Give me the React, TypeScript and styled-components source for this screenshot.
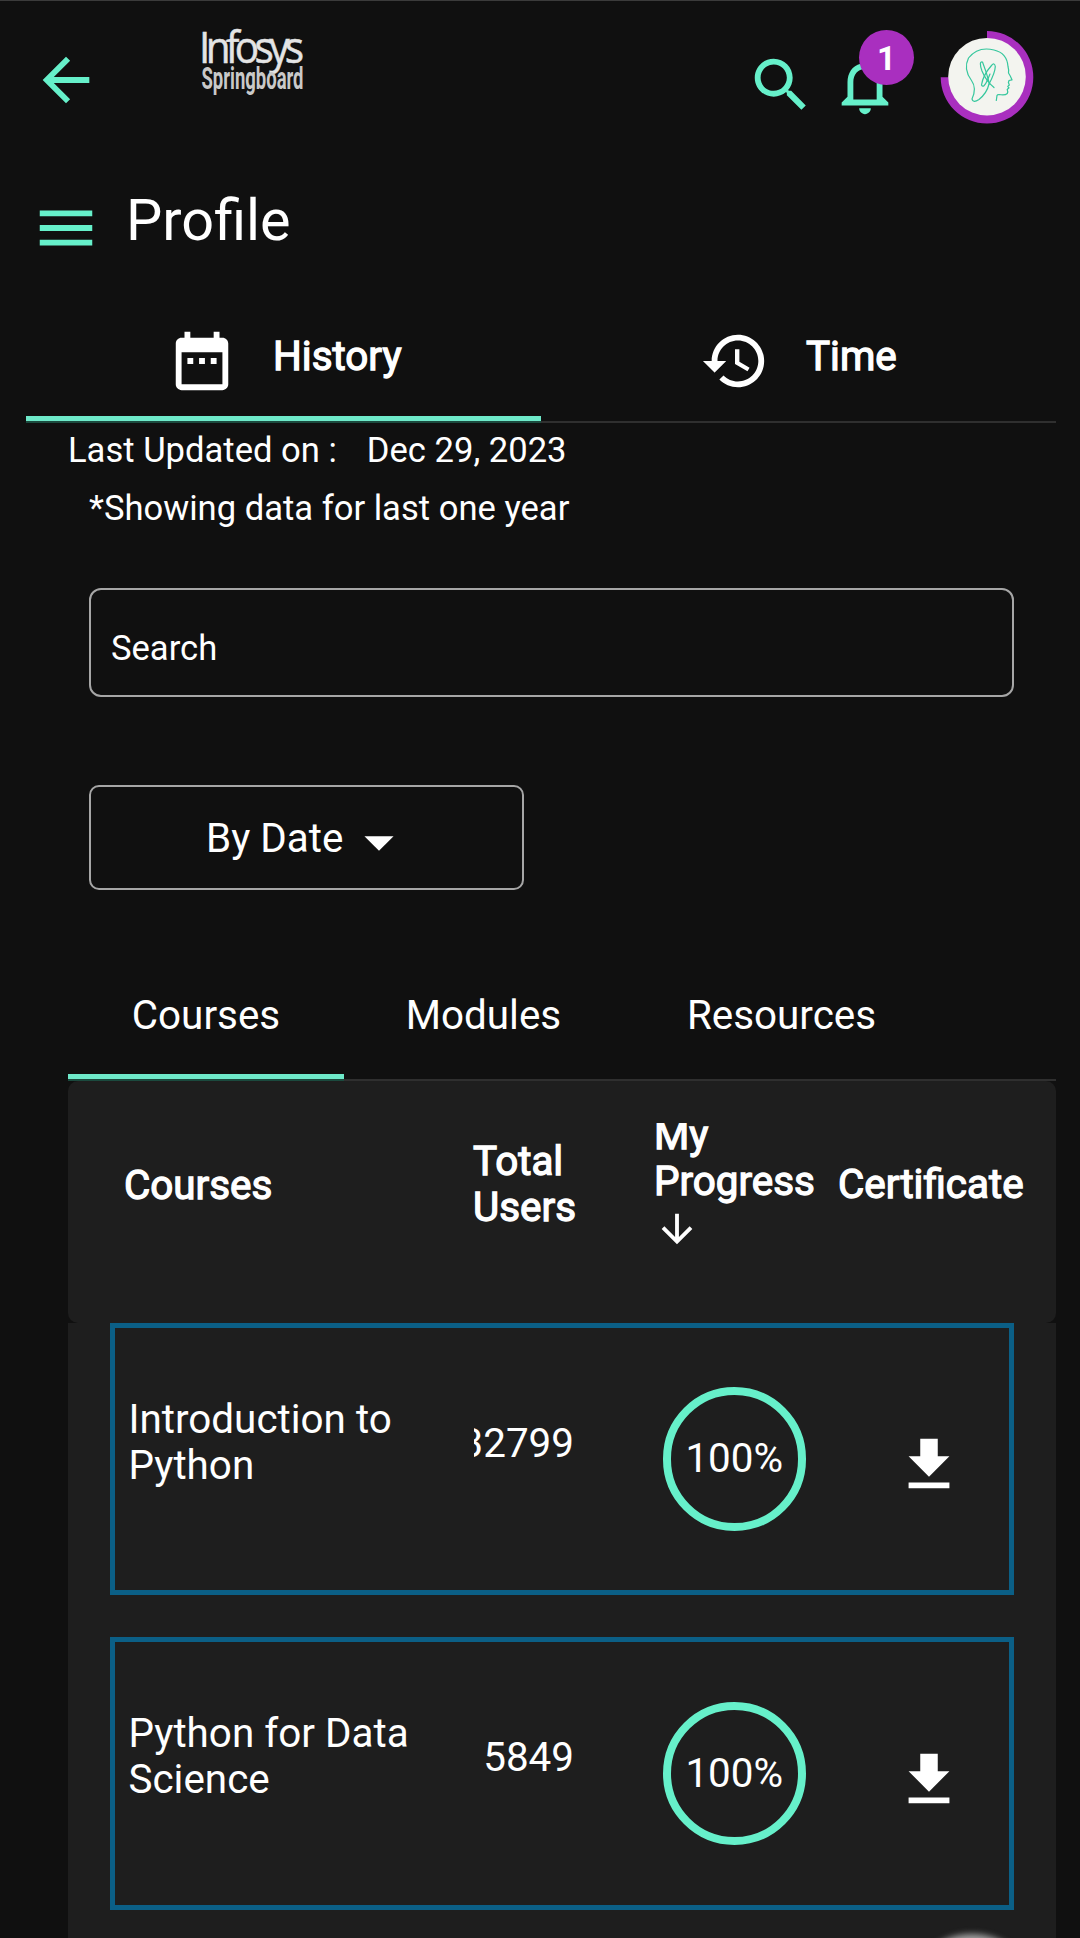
import React from "react";
import styled, { createGlobalStyle } from "styled-components";

const mint = "#66f0ca";
const purple = "#a92fbf";

const GlobalStyle = createGlobalStyle`
  body {
    margin: 0;
    background: #101010;
    color: #fff;
    font-family: Roboto, "Noto Sans", sans-serif;
  }
  *, *::before, *::after { box-sizing: border-box; }
`;

const Screen = styled.div`
  position: relative;
  display: flex;
  flex-direction: column;
  width: 1080px;
  height: 1938px;
  overflow: hidden;
  background: #101010;
  border-top: 1px solid #3b3b3b;
  > * { flex: none; }
`;

const Icon = styled.svg<{ $size: number; $color?: string }>`
  display: block;
  flex: none;
  width: ${(p) => p.$size}px;
  height: ${(p) => p.$size}px;
  fill: ${(p) => p.$color ?? "#fff"};
`;

const TopBar = styled.header`
  display: flex;
  align-items: flex-start;
  height: 150px;
  padding: 14px 41px 0 31px;
`;

const BackButton = styled.div`
  padding-top: 30px;
`;

const Logo = styled.svg`
  display: block;
  width: 130px;
  height: 92px;
  margin-left: 87px;
  margin-right: auto;
`;

const Actions = styled.div`
  display: flex;
  align-items: flex-start;
  padding-top: 10px;
`;

const SearchButton = styled.div`
  padding-top: 25px;
  margin-right: 14px;
`;

const Bell = styled.div`
  position: relative;
  width: 70px;
  padding-top: 25px;
  margin-right: 35px;
`;

const Badge = styled.span`
  position: absolute;
  top: 5px;
  left: 29px;
  width: 55px;
  height: 55px;
  border-radius: 50%;
  background: ${purple};
  font-size: 33px;
  font-weight: 700;
  line-height: 57px;
  text-align: center;
`;

const Avatar = styled.svg`
  display: block;
  width: 104px;
  height: 104px;
`;

const TitleRow = styled.div`
  display: flex;
  align-items: flex-start;
  height: 147px;
  padding: 42px 0 0 31px;
`;

const Title = styled.h1`
  margin: -1px 0 0 25px;
  font-size: 57.6px;
  font-weight: 400;
  line-height: 58px;
`;

const MainTabs = styled.nav`
  display: grid;
  grid-template-columns: 515px 515px;
  margin-left: 26px;
  width: 1030px;
  height: 125px;
`;

const MainTab = styled.div<{ $active?: boolean; $start: number }>`
  display: flex;
  align-items: flex-start;
  padding: 28px 0 0 ${(p) => p.$start}px;
  border-bottom: 2px solid ${(p) => (p.$active ? "#1b4a3e" : "#2f2f2f")};
  box-shadow: ${(p) => (p.$active ? "inset 0 -5px 0 #6ee9c9" : "none")};
`;

const TabLabel = styled.span`
  margin: 8px 0 0 36px;
  font-size: 40.4px;
  line-height: 46px;
  -webkit-text-stroke: 1.3px #fff;
`;

const Meta = styled.div`
  display: flex;
  gap: 30px;
  padding: 6px 0 0 68px;
  font-size: 34.6px;
  line-height: 42px;
`;

const Note = styled.div`
  padding: 16px 0 0 89px;
  font-size: 34.6px;
  line-height: 42px;
`;

const SearchField = styled.div`
  display: flex;
  align-items: center;
  width: 925px;
  height: 109px;
  margin: 59px 0 0 89px;
  padding: 11px 0 0 20px;
  border: 2px solid #a6a6a6;
  border-radius: 12px;
  font-size: 34.6px;
`;

const SortSelect = styled.div`
  display: flex;
  align-items: center;
  width: 435px;
  height: 105px;
  margin: 88px 0 0 89px;
  padding: 2px 0 0 115px;
  border: 2px solid #a6a6a6;
  border-radius: 10px;
  font-size: 40.4px;
  line-height: 48px;
  svg { margin: 7px 0 0 1px; }
`;

const SubTabs = styled.nav`
  display: flex;
  width: 988px;
  height: 131px;
  margin: 60px 0 0 68px;
  border-bottom: 2px solid #2f2f2f;
`;

const SubTab = styled.div<{ $width: number; $active?: boolean }>`
  width: ${(p) => p.$width}px;
  height: 131px;
  padding-top: 43px;
  text-align: center;
  font-size: 40.4px;
  line-height: 46px;
  border-bottom: 2px solid ${(p) => (p.$active ? "#1b4a3e" : "transparent")};
  box-shadow: ${(p) => (p.$active ? "inset 0 -5px 0 #6ee9c9" : "none")};
`;

const TableHead = styled.div`
  display: grid;
  grid-template-columns: 349px 181px 184px 1fr;
  width: 988px;
  height: 241.9px;
  margin-left: 68px;
  padding: 42px 0 0 56px;
  border-radius: 10px;
  background: #1e1e1e;
`;

const HeadCell = styled.div<{ $top: number }>`
  padding-top: ${(p) => p.$top}px;
  font-size: 40.4px;
  line-height: 46px;
  -webkit-text-stroke: 1.3px #fff;
`;

const SortedHead = styled.div`
  height: 130px;
  overflow: hidden;
  svg { margin-top: 1px; }
`;

const SortedLabel = styled.div`
  margin-top: -10px;
  font-size: 40.4px;
  line-height: 46px;
  -webkit-text-stroke: 1.3px #fff;
`;

const List = styled.div`
  display: flex;
  flex-direction: column;
  gap: 42px;
  width: 988px;
  height: 640px;
  margin-left: 68px;
  padding: 0 42px;
  background: #1e1e1e;
`;

const CourseCard = styled.article`
  display: grid;
  grid-template-columns: 346px 100px 88px 144px 1fr;
  flex: none;
  height: 272.5px;
  padding-left: 13px;
  border: 5px solid #0b5f86;
`;

const CourseName = styled.div`
  width: 300px;
  padding: 69px 0 0 0.5px;
  font-size: 40.4px;
  line-height: 46px;
`;

const Users = styled.div`
  display: flex;
  justify-content: flex-end;
  overflow: hidden;
  padding-top: 93px;
  font-size: 40.4px;
  line-height: 46px;
`;

const Ring = styled.div`
  grid-column: 4;
  display: flex;
  align-items: center;
  justify-content: center;
  width: 143.5px;
  height: 143.5px;
  margin: 59.5px 0 0 0.5px;
  border: 8px solid ${mint};
  border-radius: 50%;
  font-size: 40.4px;
  line-height: 46px;
`;

const Download = styled.div`
  padding: 102.5px 0 0 88px;
`;

const FloatingGlow = styled.div`
  position: absolute;
  left: 906px;
  top: 1933px;
  width: 132px;
  height: 132px;
  border-radius: 50%;
  background: #a0a0a0;
  filter: blur(3px);
`;

const courses = [
  { name: "Introduction to Python", users: "32799", progress: "100%" },
  { name: "Python for Data Science", users: "5849", progress: "100%" },
];

export default function App() {
  return (
    <>
      <GlobalStyle />
      <Screen>
        <TopBar>
          <BackButton>
            <Icon $size={70} $color={mint} viewBox="0 0 24 24">
              <path d="M20 11H7.83l5.59-5.59L12 4l-8 8 8 8 1.41-1.41L7.83 13H20v-2z" />
            </Icon>
          </BackButton>
          <Logo viewBox="0 0 130 92">
            <text x="11" y="48" fontFamily="Open Sans, sans-serif" fontSize="43.5" fontWeight="400" fill="#e4e4e4" stroke="#e4e4e4" strokeWidth="0.5" textLength="100.500" lengthAdjust="spacingAndGlyphs" letterSpacing="-5">Infosys</text>
            <text x="13.5" y="74" fontFamily="Roboto, sans-serif" fontSize="30.5" fontWeight="700" fill="#c9c9c9" textLength="102" lengthAdjust="spacingAndGlyphs">Springboard</text>
          </Logo>
          <Actions>
            <SearchButton>
              <Icon $size={70} $color={mint} viewBox="0 0 24 24">
                <path d="M15.5 14h-.79l-.28-.27C15.41 12.59 16 11.11 16 9.5 16 5.91 13.09 3 9.5 3S3 5.91 3 9.5 5.91 16 9.5 16c1.61 0 3.09-.59 4.23-1.57l.27.28v.79l5 4.99L20.49 19l-4.99-5zm-6 0C7.01 14 5 11.99 5 9.5S7.01 5 9.5 5 14 7.01 14 9.5 11.99 14 9.5 14z" />
              </Icon>
            </SearchButton>
            <Bell>
              <Icon $size={70} $color={mint} viewBox="0 0 24 24">
                <path d="M12 22c1.1 0 2-.9 2-2h-4c0 1.1.9 2 2 2zm6-6v-5c0-3.07-1.63-5.64-4.5-6.32V4c0-.83-.67-1.5-1.5-1.5s-1.5.67-1.5 1.5v.68C7.64 5.36 6 7.92 6 11v5l-2 2v1h16v-1l-2-2zm-2 1H8v-6c0-2.48 1.51-4.5 4-4.5s4 2.02 4 4.5v6z" />
              </Icon>
              <Badge>1</Badge>
            </Bell>
            <Avatar viewBox="0 0 104 104">
              <path d="M52 6a46.3 46.3 0 1 1-46.3 46.3H52z" fill={purple} />
              <circle cx="52" cy="51.7" r="38.8" fill="#f3f4ef" />
              <g fill="none" stroke="#35c79d" strokeWidth="1.2" strokeLinecap="round" strokeLinejoin="round">
                <path d="M61.3 75.5 L62 70.5 Q62.3 69.5 64 69.5 Q70 70.7 72.3 68.5 Q73.2 66.5 72.2 64.5 L74 62.8 L72.8 61.5 L74.3 60 L73.4 57.5 L74 55.5 L77 54.8 Q75.5 51 73.5 48 Q74 45 73 41.5 Q72 28 59 25 Q43 21 33.5 33 Q28 44 36.5 55.5 Q42 63 37 74 Q38 78.5 44 74.5 Q52 68 54 59" />
                <path d="M54 59 Q60 48 60.3 41.5 Q59.5 37 56.5 40.5 Q48 50 46.5 60 Q48.500 64 52.5 55 L55 49" />
                <path d="M59 62.5 Q51 56 47 46 Q43.500 36 47.5 37 Q51.500 47 54.5 59" />
              </g>
            </Avatar>
          </Actions>
        </TopBar>

        <TitleRow>
          <Icon $size={70} $color={mint} viewBox="0 0 24 24">
            <path d="M3 18h18v-2H3v2zm0-5h18v-2H3v2zm0-7v2h18V6H3z" />
          </Icon>
          <Title>Profile</Title>
        </TitleRow>

        <MainTabs>
          <MainTab $active $start={141}>
            <Icon $size={70} viewBox="0 0 24 24">
              <path d="M9 11H7v2h2v-2zm4 0h-2v2h2v-2zm4 0h-2v2h2v-2zm2-7h-1V2h-2v2H8V2H6v2H5c-1.11 0-1.99.9-1.99 2L3 20c0 1.1.89 2 2 2h14c1.1 0 2-.9 2-2V6c0-1.1-.9-2-2-2zm0 16H5V9h14v11z" />
            </Icon>
            <TabLabel>History</TabLabel>
          </MainTab>
          <MainTab $start={159}>
            <Icon $size={70} viewBox="0 0 24 24">
              <path d="M13 3c-4.97 0-9 4.03-9 9H1l3.89 3.89.07.14L9 12H6c0-3.87 3.13-7 7-7s7 3.13 7 7-3.13 7-7 7c-1.93 0-3.68-.79-4.94-2.06l-1.42 1.42C8.27 19.99 10.51 21 13 21c4.97 0 9-4.03 9-9s-4.03-9-9-9zm-1 5v5l4.28 2.54.72-1.21-3.5-2.08V8H12z" />
            </Icon>
            <TabLabel>Time</TabLabel>
          </MainTab>
        </MainTabs>

        <Meta>
          <span>Last Updated on :</span>
          <span>Dec 29, 2023</span>
        </Meta>
        <Note>*Showing data for last one year</Note>

        <SearchField>Search</SearchField>
        <SortSelect>
          By Date
          <Icon $size={70} viewBox="0 0 24 24">
            <path d="M7 10l5 5 5-5z" />
          </Icon>
        </SortSelect>

        <SubTabs>
          <SubTab $width={276} $active>Courses</SubTab>
          <SubTab $width={279}>Modules</SubTab>
          <SubTab $width={317}>Resources</SubTab>
        </SubTabs>

        <TableHead>
          <HeadCell $top={40}>Courses</HeadCell>
          <HeadCell $top={16}>Total<br />Users</HeadCell>
          <SortedHead>
            <SortedLabel>My<br />Progress</SortedLabel>
            <Icon $size={46} viewBox="0 0 24 24">
              <path d="M20 12l-1.41-1.41L13 16.17V4h-2v12.17l-5.58-5.59L4 12l8 8 8-8z" />
            </Icon>
          </SortedHead>
          <HeadCell $top={39}>Certificate</HeadCell>
        </TableHead>

        <List>
          {courses.map((c) => (
            <CourseCard key={c.name}>
              <CourseName>{c.name}</CourseName>
              <Users>{c.users}</Users>
              <Ring>{c.progress}</Ring>
              <Download>
                <Icon $size={70} viewBox="0 0 24 24">
                  <path d="M19 9h-4V3H9v6H5l7 7 7-7zM5 18v2h14v-2H5z" />
                </Icon>
              </Download>
            </CourseCard>
          ))}
        </List>
        <FloatingGlow />
      </Screen>
    </>
  );
}
